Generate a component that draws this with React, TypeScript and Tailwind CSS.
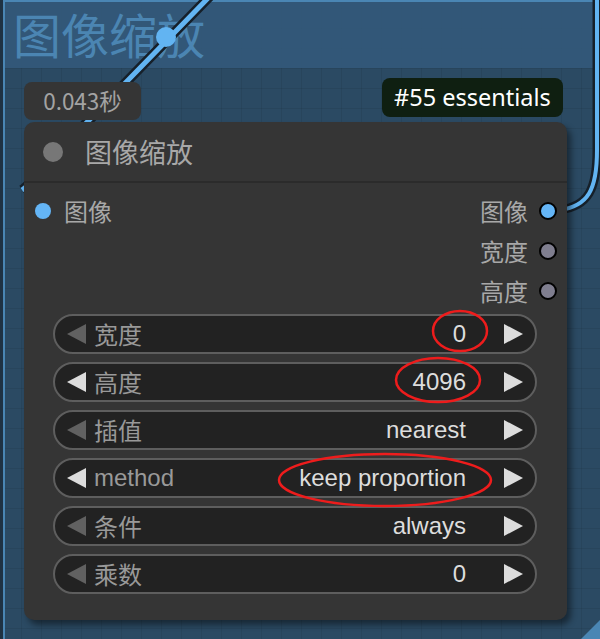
import React from "react";

const cjk = { fontFamily: '"Noto Sans CJK SC", "Noto Sans", sans-serif' };
const arial = { fontFamily: '"Liberation Sans", "Noto Sans CJK SC", sans-serif' };

function LeftArrow({ on }: { on: boolean }) {
  return (
    <svg width="20" height="22" viewBox="0 0 20 22" className="shrink-0">
      <polygon points="20,1 20,21 1,11" fill={on ? "#dddddd" : "#616161"} />
    </svg>
  );
}
function RightArrow() {
  return (
    <svg width="20" height="22" viewBox="0 0 20 22" className="shrink-0">
      <polygon points="0,1 0,21 19,11" fill="#dddddd" />
    </svg>
  );
}

const widgets = [
  { label: "宽度", value: "0", on: false, latin: false },
  { label: "高度", value: "4096", on: true, latin: false },
  { label: "插值", value: "nearest", on: false, latin: false },
  { label: "method", value: "keep proportion", on: true, latin: true },
  { label: "条件", value: "always", on: false, latin: false },
  { label: "乘数", value: "0", on: false, latin: false },
];

export default function App() {
  return (
    <div className="relative w-[600px] h-[639px] overflow-hidden bg-[#1f3243]">
      {/* group */}
      <div className="absolute left-[3px] top-0 w-[620px] h-[660px] border-l-2 border-t-2 border-[#4a86b4] bg-[#2b4a63] bg-[image:linear-gradient(rgba(0,0,0,0.07)_1px,transparent_1px),linear-gradient(90deg,rgba(0,0,0,0.07)_1px,transparent_1px)] bg-[size:20px_20px] bg-[position:-4px_6px]">
        <div className="h-[66px] bg-[#33597a]/90 flex items-start pl-[8px]">
          <span className="text-[48px] leading-[62px] text-[#4b85b2]" style={cjk}>图像缩放</span>
        </div>
      </div>
      {/* resize corner */}
      <svg className="absolute left-0 top-0" width="600" height="639">
        <polygon points="600,620 600,639 581,639" fill="#4a86b4" />
      </svg>

      {/* wires */}
      <svg className="absolute left-0 top-0" width="600" height="639">
        <path d="M 214 -8 L 60 150 C 40 172, 30 185, 22 190" stroke="#16202a" strokeWidth="10" fill="none" />
        <path d="M 214 -8 L 60 150 C 40 172, 30 185, 22 190" stroke="#62b4f2" strokeWidth="5" fill="none" />
        <circle cx="166" cy="37" r="10" fill="#62b4f2" />
        <path d="M 560 210 C 588 206, 597 190, 597 150 L 597 -10" stroke="#16202a" strokeWidth="9" fill="none" />
        <path d="M 560 210 C 588 206, 597 190, 597 150 L 597 -10" stroke="#62b4f2" strokeWidth="4" fill="none" />
      </svg>

      {/* badges */}
      <div className="absolute left-[24px] top-[82px] w-[117px] h-[38px] rounded-lg bg-[#353535] flex items-center justify-center">
        <span className="text-[22.5px] text-[#a3a3a3]" style={cjk}>0.043秒</span>
      </div>
      <div className="absolute left-[382px] top-[78px] w-[181px] h-[39px] rounded-[8px] bg-[#0f1f11] flex items-center justify-center">
        <span className="text-[23.5px] text-white" style={{ fontFamily: '"Noto Sans", sans-serif' }}>#55 essentials</span>
      </div>

      {/* node */}
      <div className="absolute left-[24px] top-[122px] w-[543px] h-[498px] rounded-[10px] bg-[#353535] shadow-[4px_5px_6px_rgba(0,0,0,0.45)] flex flex-col">
        <div className="h-[61px] shrink-0 flex items-center border-b-2 border-[#2b2b2b] pl-[19px] gap-[22px]">
          <div className="w-5 h-5 rounded-full bg-[#777777]" />
          <span className="text-[27px] text-[#a8a8a8] leading-none" style={cjk}>图像缩放</span>
        </div>
        <div className="flex mt-[8px]">
          <div className="flex-1">
            <div className="h-10 flex items-center pl-[11px] gap-[13px]">
              <div className="w-[16px] h-[16px] rounded-full bg-[#64b5f6]" />
              <span className="text-[24px] text-[#a8a8a8]" style={cjk}>图像</span>
            </div>
          </div>
          <div className="flex flex-col pr-[10px]">
            {[
              { t: "图像", c: "#64b5f6" },
              { t: "宽度", c: "#7f7e8f" },
              { t: "高度", c: "#7f7e8f" },
            ].map((o) => (
              <div key={o.t} className="h-10 flex items-center justify-end gap-[11px]">
                <span className="text-[24px] text-[#a8a8a8]" style={cjk}>{o.t}</span>
                <div className="w-[18px] h-[18px] rounded-full border-2 border-black" style={{ backgroundColor: o.c }} />
              </div>
            ))}
          </div>
        </div>
        <div className="flex flex-col gap-2 ml-[29px] w-[484px] mt-[3px]">
          {widgets.map((w) => (
            <div key={w.label} className="h-10 rounded-full bg-[#222222] border-2 border-[#5e5e5e] flex items-center pl-[11px] pr-[11px]">
              <LeftArrow on={w.on} />
              <span className="ml-[8px] text-[24px] text-[#999999]" style={w.latin ? arial : cjk}>{w.label}</span>
              <span className="ml-auto mr-[38px] text-[24px] text-[#dddddd]" style={arial}>{w.value}</span>
              <RightArrow />
            </div>
          ))}
        </div>
      </div>

      {/* annotations */}
      <svg className="absolute left-0 top-0 pointer-events-none" width="600" height="639">
        <ellipse cx="460" cy="331" rx="27" ry="20" stroke="#ee1c1c" strokeWidth="2.5" fill="none" />
        <ellipse cx="438" cy="380" rx="42" ry="22" stroke="#ee1c1c" strokeWidth="2.5" fill="none" />
        <ellipse cx="385" cy="480" rx="106" ry="26" stroke="#ee1c1c" strokeWidth="2.5" fill="none" />
      </svg>
    </div>
  );
}
